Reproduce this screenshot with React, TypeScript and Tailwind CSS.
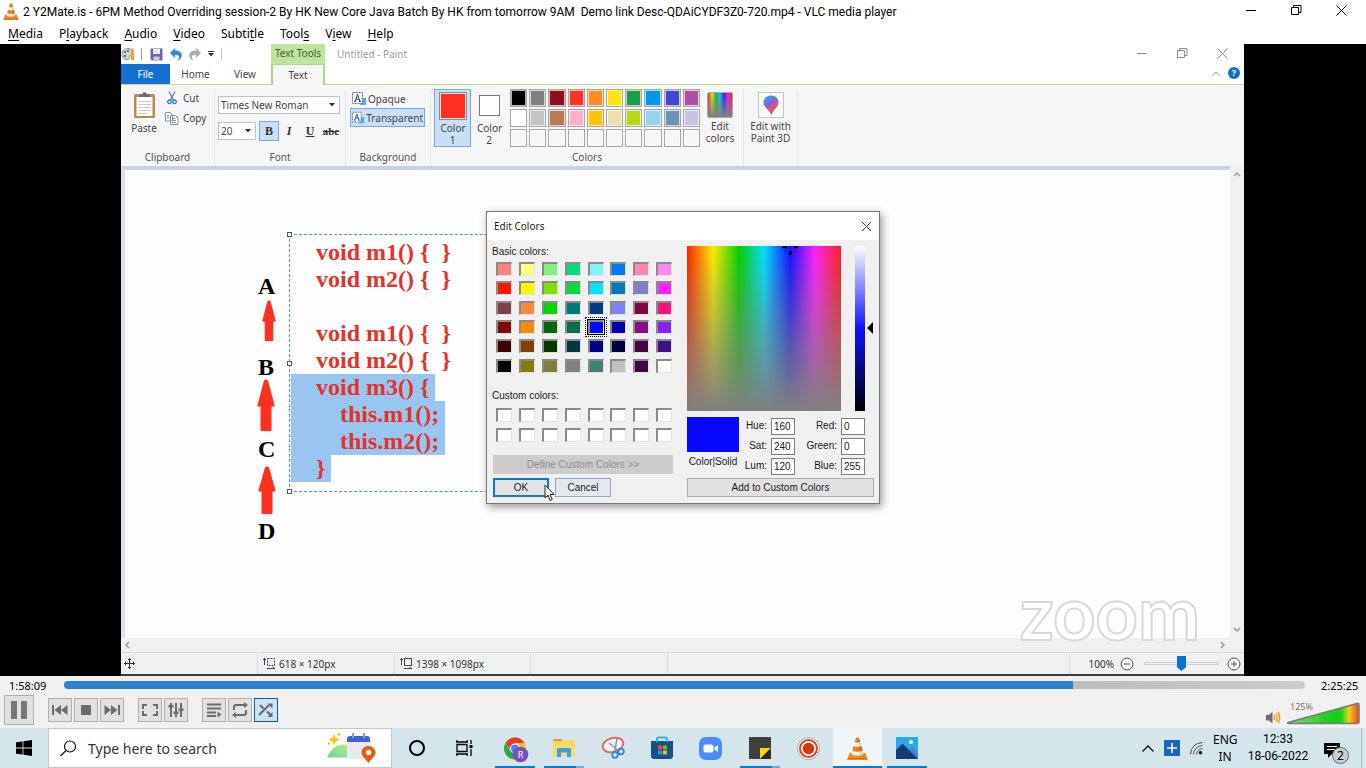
import React from "react";

const BASIC = [
  "#ff8080", "#ffff80", "#80f080", "#00dd80", "#80f5f5", "#0078ff", "#ff85b5", "#ff88f8",
  "#ff1500", "#fff500", "#80e000", "#00dc40", "#00e5ff", "#0078c0", "#8080c8", "#ff20ff",
  "#804048", "#ff8840", "#00d800", "#007878", "#003c80", "#8080ff", "#800840", "#ff1080",
  "#800808", "#ff8800", "#006800", "#007048", "#0808ff", "#0000a8", "#881080", "#8820ff",
  "#400000", "#804000", "#003800", "#003840", "#000088", "#000040", "#400840", "#401088",
  "#000000", "#808000", "#80803c", "#808080", "#408078", "#c0c0c0", "#400840", "#ffffff",
];
const PALETTE = [
  "#000000", "#7f7f7f", "#8c0f1f", "#ff3028", "#ff8a20", "#ffe800", "#1a9c4a", "#0096f0", "#4048d0", "#a852a4",
  "#ffffff", "#c3c3c3", "#ba7a56", "#ffb0c8", "#ffc408", "#eee0a8", "#b5d818", "#94d4ea", "#7092b4", "#c8c4e0",
  "#f6f6f6", "#f6f6f6", "#f6f6f6", "#f6f6f6", "#f6f6f6", "#f6f6f6", "#f6f6f6", "#f6f6f6", "#f6f6f6", "#f6f6f6",
];

function Cone({ className }: { className: string }) {
  return (
    <svg viewBox="0 0 20 22" className={className} aria-hidden="true">
      <path d="M2.5 15h15l2.3 6.5H.2z" fill="#f08a1c" />
      <path d="M.6 20.3h18.8l.4 1.3H.2z" fill="#c9620c" />
      <path d="M8.6.6h2.8L15.8 16c-2 2.4-9.600 2.400-11.600 0z" fill="#f4f4f4" />
      <path d="M8.600.6h2.800l1.300 4.200c-1.300.9-4.100.9-5.400 0z" fill="#ef7d12" />
      <path d="M6.200 8.600c2 1.200 5.600 1.200 7.600 0l1.200 4.200c-2.500 1.600-7.500 1.600-10 0z" fill="#ef7d12" />
      <path d="M11 .6h.4L15.800 16c-1 1.200-2.600 1.600-3.600 1.700z" fill="#00000022" />
    </svg>
  );
}

function WinButtons({ tone }: { tone: "main" | "paint" }) {
  const main = tone === "main";
  const btn = main ? "flex h-5 w-[45px] items-center justify-center text-black" : "flex h-[18px] w-10 items-center justify-center text-[#8d8d8d]";
  return (
    <div className={main ? "flex pr-0.5" : "flex pr-0.5"}>
      <button aria-label="Minimize" className={btn}>
        <svg width="11" height="11" stroke="currentColor" fill="none"><path d="M0 5.500h10" /></svg>
      </button>
      <button aria-label="Restore" className={btn}>
        <svg width="11" height="11" stroke="currentColor" fill="none"><path d="M.5 2.500h7v7h-7zM2.500 2.500v-2h7.500v7h-2.500" /></svg>
      </button>
      <button aria-label="Close" className={btn}>
        <svg width="11" height="11" stroke="currentColor" fill="none"><path d="M.5.5l10 10M10.500.5l-10 10" /></svg>
      </button>
    </div>
  );
}

const MENUS: [string, string, string][] = [
  ["", "M", "edia"], ["P", "l", "ayback"], ["", "A", "udio"], ["", "V", "ideo"],
  ["Subti", "t", "le"], ["Tool", "s", ""], ["V", "i", "ew"], ["", "H", "elp"],
];

function VlcHeader() {
  return (
    <header className="bg-white text-black">
      <div className="flex h-6 items-start">
        <Cone className="ml-[3px] mr-1 mt-[3px] h-[17px] w-4" />
        <h1 className="flex-1 whitespace-pre pt-1 font-['Roboto',sans-serif] text-[12px] leading-4">
          2 Y2Mate.is - 6PM Method Overriding session-2 By HK New Core Java Batch By HK from tomorrow 9AM  Demo link Desc-QDAiCYDF3Z0-720.mp4 - VLC media player
        </h1>
        <WinButtons tone="main" />
      </div>
      <nav className="flex h-5 items-center gap-4 px-2 text-[12px] leading-4">
        {MENUS.map(([a, b, c]) => (
          <button key={a + b + c}>{a}<span className="underline underline-offset-2">{b}</span>{c}</button>
        ))}
      </nav>
    </header>
  );
}

function Caret() {
  return <svg width="6" height="4" aria-hidden="true"><path d="M0 0h6L3 3.500z" fill="#333" /></svg>;
}

function SelectionIcon() {
  return (
    <svg width="14" height="14" viewBox="0 0 14 14" aria-hidden="true">
      <rect x="8" y="6" width="6" height="7" fill="#5aa9ee" />
      <rect x=".5" y=".5" width="10" height="11" fill="#f4f8fc" stroke="#55708c" strokeDasharray="2 1" />
      <path d="M3 9.500L5.500 2.500l2.500 7M4 7.200h3M2.300 9.500h1.600M7 9.500h1.800" fill="none" stroke="#2d4560" />
    </svg>
  );
}

function Group({ label, className, children }: { label: string; className: string; children?: React.ReactNode }) {
  return (
    <section className={"flex flex-col border-r border-[#e4e5e7] " + className} aria-label={label || "Paint 3D"}>
      <div className="flex flex-1">{children}</div>
      <div className="mb-px h-4 text-center leading-4 text-[#555]">{label}</div>
    </section>
  );
}

function PaintHeader() {
  return (
    <div>
      <div className="flex h-[41px] items-stretch border-b border-[#b5e092] bg-white">
        <div className="flex w-[150px] flex-col">
          <div className="flex h-5 items-center">
            <svg width="15" height="14" viewBox="0 0 15 14" aria-hidden="true">
              <path d="M1 7c0-3 3-5.500 6-5.500S12 3 12 6 9 7 9 9s-1 4-4 3.500S1 10 1 7z" fill="#cdd6de" stroke="#8594a0" />
              <circle cx="4" cy="5" r="1.200" fill="#e04343" /><circle cx="7" cy="4" r="1.200" fill="#37a148" /><circle cx="4" cy="9" r="1.300" fill="#2d7ad0" />
              <path d="M10 3.500l1.500-3L13 3.500V13h-3z" fill="#f0a040" />
            </svg>
            <i className="ml-[5px] h-3 w-px bg-[#999]" />
            <button aria-label="Save" className="ml-2">
              <svg width="13" height="13" viewBox="0 0 13 13"><path d="M.5.5h12v12H2L.5 11z" fill="#7862a8" /><path d="M3 1h7v5H3z" fill="#eceaf4" /><path d="M3.500 8.500h6V12h-6z" fill="#cfc8e2" /></svg>
            </button>
            <button aria-label="Undo" className="ml-[7px]">
              <svg width="12" height="13" viewBox="0 0 12 13"><path d="M5 0v2.500c9-.5 8.500 9 2 10.500 3.500-3.500 2.500-6.500-2-6v3L0 5z" fill="#3289d4" /></svg>
            </button>
            <button aria-label="Redo" className="ml-[7px]">
              <svg width="12" height="13" viewBox="0 0 12 13"><path d="M7 0v2.500c-9-.5-8.500 9-2 10.500-3.500-3.500-2.500-6.500 2-6v3L12 5z" fill="#a9adb2" /></svg>
            </button>
            <button aria-label="Customize toolbar" className="ml-[7px] flex flex-col items-center gap-px">
              <i className="h-px w-1.5 bg-[#333]" /><Caret />
            </button>
            <i className="ml-[7px] h-3 w-px bg-[#bbb]" />
          </div>
          <div className="flex h-5 text-[#444]">
            <button className="w-[49px] bg-[#1470d0] text-white">File</button>
            <button className="w-[51px]">Home</button>
            <button className="w-12">View</button>
          </div>
        </div>
        <div className="-mb-px flex w-[54px] flex-col text-center text-[#444]">
          <div className="h-5 bg-[#bfe49b] leading-[18px] text-[#3f6234]">Text Tools</div>
          <button className="flex-1 border-x-2 border-t border-[#a9dc80] bg-[#f6f6f6]">Text</button>
        </div>
        <div className="h-5 flex-1 pl-3 leading-5 text-[#9b9b9b]">Untitled - Paint</div>
        <div className="flex flex-col items-end">
          <WinButtons tone="paint" />
          <div className="flex h-[23px] items-center gap-2 pr-1">
            <svg width="8" height="5" fill="none" stroke="#999" aria-hidden="true"><path d="M.5 4.500L4 1l3.500 3.500" /></svg>
            <button aria-label="Help" className="size-3 rounded-full bg-[#0f6fcb] text-[9px] font-bold leading-3 text-white">?</button>
          </div>
        </div>
      </div>
      <div className="flex h-[81px] bg-[#f6f6f6] pt-1 text-[#444]">
        <Group label="Clipboard" className="w-[94px]">
          <button className="flex w-[46px] flex-col items-center pt-[3px]">
            <svg width="23" height="27" viewBox="0 0 23 27" aria-hidden="true">
              <rect x="1" y="2" width="21" height="24" rx="1.500" fill="#b98c4e" />
              <rect x="3.500" y="5" width="16" height="19" fill="#fff" />
              <path d="M5 9.500h13M5 12.500h13M5 15.500h13M5 18.500h13M5 21.500h9" stroke="#c2ccd6" />
              <path d="M6 5V2.500h3L10 .5h3l1 2h3V5z" fill="#666d75" />
            </svg>
            <span className="leading-[18px]">Paste</span>
          </button>
          <div className="flex flex-col gap-1 pt-px">
            <button className="flex h-4 items-center gap-1.5">
              <svg width="10" height="14" viewBox="0 0 10 14" fill="none" aria-hidden="true"><path d="M2 .5l4.500 8.500M8 .5L3.500 9" stroke="#6d7a88" strokeWidth="1.300" /><circle cx="2.500" cy="10.800" r="1.800" stroke="#2a7cc4" strokeWidth="1.300" /><circle cx="7.500" cy="10.800" r="1.800" stroke="#2a7cc4" strokeWidth="1.300" /></svg>
              Cut
            </button>
            <button className="-ml-0.5 flex h-4 items-center gap-1">
              <svg width="14" height="13" viewBox="0 0 14 13" fill="#fff" stroke="#8594a5" aria-hidden="true"><path d="M.5.5h5l2 2v6.500h-7zM5.500 3.500h5l2.500 2.500v6.500H5.500zM7 6.500h3M7 8.500h4M7 10.500h4M2 3.500h2M2 5.500h2" /></svg>
              Copy
            </button>
          </div>
        </Group>
        <Group label="Font" className="w-[131px]">
          <div className="flex flex-col gap-[7px] pl-[3px] pt-[7px]">
            <label className="relative flex h-[18px] w-[122px] items-center border border-[#bcc4d0] bg-white">
              <select aria-label="Font family" className="w-full appearance-none pl-0.5 leading-4"><option>Times New Roman</option></select>
              <span className="pointer-events-none absolute right-1 flex"><Caret /></span>
            </label>
            <div className="flex items-center gap-[3px]">
              <label className="relative flex h-[18px] w-[38px] items-center border border-[#bcc4d0] bg-white">
                <select aria-label="Font size" className="w-full appearance-none pl-0.5 leading-4"><option>20</option></select>
                <span className="pointer-events-none absolute right-1 flex"><Caret /></span>
              </label>
              <div className="flex font-['Liberation_Serif',serif] text-[12px] font-bold text-[#333]">
                <button className="h-5 w-5 border border-[#7aa9dc] bg-[#c9dff5]">B</button>
                <button className="h-5 w-5 italic">I</button>
                <button className="h-5 w-[22px] underline">U</button>
                <button className="h-5 w-5 text-[11px] line-through">abc</button>
              </div>
            </div>
          </div>
        </Group>
        <Group label="Background" className="w-[85px]">
          <div className="flex w-full flex-col pl-1 pr-[5px]">
            <button className="flex h-[19px] items-center gap-0.5 px-0.5"><SelectionIcon />Opaque</button>
            <button className="flex h-[19px] items-center gap-0.5 border border-[#7aa9dc] bg-[#c9dff5] px-px"><SelectionIcon />Transparent</button>
          </div>
        </Group>
        <Group label="Colors" className="w-[313px]">
          <button className="ml-[3px] flex h-[58px] w-[37px] flex-col items-center border border-[#7aa9dc] bg-[#c9dff5] pt-0.5 leading-3">
            <i className="mb-0.5 size-7 border border-[#8d8d8d] bg-[#ff3020] ring-1 ring-inset ring-[#ddd]" />
            <span className="w-6">Color 1</span>
          </button>
          <button className="flex h-[58px] w-9 flex-col items-center pt-1.5 leading-3">
            <i className="mb-1.5 size-[21px] border border-[#777] bg-white" />
            <span className="w-6">Color 2</span>
          </button>
          <div className="ml-px grid h-[58px] w-[194px] grid-cols-10 grid-rows-3 gap-0.5 px-0.5">
            {PALETTE.map((c, i) => (
              <button key={i} aria-label={"Color " + (i + 1)} className="border border-[#a5a5a5] ring-1 ring-inset ring-white/70" style={{ backgroundColor: c }} />
            ))}
          </div>
          <button className="ml-px flex w-[34px] flex-col items-center pt-[3px] leading-3">
            <i className="mb-0.5 size-[26px] rounded-xs border border-[#aaa] bg-[linear-gradient(to_bottom,transparent,#808080),linear-gradient(to_right,#e02020,#e8e820,#10c030,#10c8e8,#2020f0,#f020f0,#f02020)]" />
            <span>Edit<br />colors</span>
          </button>
        </Group>
        <Group label="" className="w-[54px]">
          <button className="flex w-full flex-col items-center pt-[3px] leading-3">
            <span className="mb-0.5 flex size-[26px] items-center justify-center border border-[#c4c4c4] bg-[#fafafa]">
              <svg width="16" height="21" viewBox="0 0 16 21" aria-hidden="true">
                <defs><linearGradient id="p3d" x1="0" y1="0" x2=".5" y2="1"><stop offset="0" stopColor="#20b8f0" /><stop offset=".45" stopColor="#7a68e0" /><stop offset=".75" stopColor="#f05060" /><stop offset="1" stopColor="#d06060" /></linearGradient></defs>
                <path d="M8 .5c4.500 0 7.500 3.200 7.500 7 0 5-6 7-7 13-2-6-8-8-8-13C.5 3.700 3.500.5 8 .5z" fill="url(#p3d)" />
              </svg>
            </span>
            <span>Edit with<br />Paint 3D</span>
          </button>
        </Group>
      </div>
    </div>
  );
}

function CodeLine({ text, selected }: { text: string; selected?: boolean }) {
  return <div className="h-[27px]"><span className={selected ? "inline-block h-[27px] bg-[#99c6f0] pl-px" : "pl-px"}>{text || " "}</span></div>;
}

function Arrow({ className }: { className: string }) {
  return (
    <svg viewBox="0 0 18 50" preserveAspectRatio="none" className={"absolute " + className} aria-hidden="true">
      <path d="M7 1.500Q9-.5 11 1.500L17.500 25q.5 1.500-1 1.500H14.500V49q0 1-1 1h-9q-1 0-1-1V26.500H1.500q-1.500 0-1-1.500z" fill="#ff3020" />
    </svg>
  );
}

function Field({ label, value }: { label: string; value: string }) {
  return (
    <label className="flex h-5 items-center justify-end gap-1">
      {label}
      <input defaultValue={value} className="h-[17px] w-6 border border-[#7d7d7d] bg-white pl-0.5 text-left outline-none" />
    </label>
  );
}

function Swatch({ color, active }: { color: string; active?: boolean }) {
  return (
    <button
      aria-label={"Color " + color}
      className={"h-[14px] w-4 border-b border-r border-b-[#e3e3e3] border-r-[#e3e3e3] border-l-2 border-t-2 border-l-[#8a8a8a] border-t-[#8a8a8a] " + (active ? "outline outline-1 outline-offset-2 outline-dotted outline-black ring-1 ring-black" : "")}
      style={{ backgroundColor: color }}
    />
  );
}

function EditColors() {
  return (
    <div role="dialog" aria-label="Edit Colors" className="absolute left-[365px] top-[45px] w-[394px] border border-[#777] bg-[#f0f0f0] pb-[6px] font-['Liberation_Sans',sans-serif] text-[10px] leading-3 text-[#1a1a1a] shadow-[2px_3px_8px_rgba(0,0,0,0.4)]">
      <div className="flex h-7 items-center bg-white px-[7px] font-['Noto_Sans',sans-serif]">
        <h2 className="flex-1">Edit Colors</h2>
        <button aria-label="Close dialog" className="text-[#333]"><svg width="11" height="11" stroke="currentColor"><path d="M1 1l9 9M10 1l-9 9" /></svg></button>
      </div>
      <div className="flex gap-[13px] px-[5px] pt-1.5">
        <div className="flex w-[182px] flex-col">
          <div>Basic colors:</div>
          <div className="mt-1 grid h-[116px] w-[187px] grid-cols-8 grid-rows-6 pl-1">
            {BASIC.map((c, i) => <Swatch key={i} color={c} active={i === 28} />)}
          </div>
          <div className="mt-3">Custom colors:</div>
          <div className="mt-1.5 grid h-[39px] w-[187px] grid-cols-8 grid-rows-2 pl-1">
            {Array.from({ length: 16 }, (_, i) => <Swatch key={i} color="#ffffff" />)}
          </div>
          <button disabled className="ml-px mt-2 h-[19px] w-[180px] bg-[#cccccc] text-[#8c8c8c]">Define Custom Colors &gt;&gt;</button>
          <div className="mt-1 flex gap-1.5 pl-px">
            <button className="h-[19px] w-14 border-2 border-[#1077d0] bg-[#e3e3e3]">OK</button>
            <button className="h-[19px] w-14 border border-[#8fa8c0] bg-[#e3e8ee]">Cancel</button>
          </div>
        </div>
        <div className="flex flex-1 flex-col">
          <div className="flex">
            <div className="relative h-[165px] w-[154px] bg-[linear-gradient(to_bottom,transparent,#808080),linear-gradient(to_right,#ff2000,#ffee00_17%,#00d000_34%,#00e0ff_50%,#1010ff_67%,#ff20ff_83%,#ff2020)]">
              <svg className="absolute left-[95px] top-0" width="17" height="10" aria-hidden="true"><path d="M0 1h5M12 1h4M8.500 5v4" stroke="#000" strokeWidth="2.500" /></svg>
            </div>
            <div className="ml-3.5 h-[165px] w-[10px] bg-[linear-gradient(to_bottom,#ffffff,#1010ff_50%,#000000)]" />
            <svg className="ml-0.5 mt-[76px]" width="6" height="12" aria-hidden="true"><path d="M6 0v12L0 6z" /></svg>
          </div>
          <div className="mt-1.5 flex">
            <div className="flex w-[52px] flex-col items-center gap-1">
              <i className="h-[35px] w-full bg-[#0808ff]" />
              <span>Color|Solid</span>
            </div>
            <div className="-mt-[1px] w-[56px]">
              <Field label="Hue:" value="160" /><Field label="Sat:" value="240" /><Field label="Lum:" value="120" />
            </div>
            <div className="-mt-[1px] w-[70px]">
              <Field label="Red:" value="0" /><Field label="Green:" value="0" /><Field label="Blue:" value="255" />
            </div>
          </div>
          <button className="mt-0.5 h-[19px] border border-[#adadad] bg-[#e1e1e1]">Add to Custom Colors</button>
        </div>
      </div>
      <svg className="absolute left-[57px] top-[272px]" width="12" height="18" viewBox="0 0 12 18" aria-hidden="true"><path d="M1 1v13l3-3 2 5.500 2.200-1L6 10.500h4z" fill="#fff" stroke="#222" /></svg>
    </div>
  );
}

function Chevron({ d }: { d: string }) {
  return <svg width="8" height="8" fill="none" stroke="#9a9a9a" strokeWidth="1.500" aria-hidden="true"><path d={d} /></svg>;
}

function PaintCanvas() {
  return (
    <div className="relative flex flex-1 flex-col bg-[#f0f0f0]">
      <div className="flex flex-1">
        <div className="flex-1 border-l-4 border-t-4 border-l-[#dbe1ea] border-t-[#c9d2df] bg-[#fdfdfd]" />
        <div className="flex w-[14px] flex-col items-center justify-between py-1">
          <Chevron d="M1 6l3-3 3 3" /><Chevron d="M1 2l3 3 3-3" />
        </div>
      </div>
      <div className="flex h-[14px] items-center justify-between pl-[3px] pr-[18px]">
        <Chevron d="M5 1L2 4l3 3" /><Chevron d="M3 1l3 3-3 3" />
      </div>

      <div className="font-['Liberation_Serif',serif] text-[24px] font-bold leading-[27px]">
        <span className="absolute left-[137px] top-[107px]">A</span>
        <span className="absolute left-[137px] top-[188px]">B</span>
        <span className="absolute left-[137px] top-[270px]">C</span>
        <span className="absolute left-[137px] top-[352px]">D</span>
        <Arrow className="left-[141px] top-[134px] h-[41px] w-[14px]" />
        <Arrow className="left-[136px] top-[213px] h-[52px] w-[18px]" />
        <Arrow className="left-[137px] top-[300px] h-[48px] w-[18px]" />
        <div className="absolute left-[168px] top-[68px] h-[258px] w-[500px] whitespace-pre border border-dashed border-[#4a97dd] pl-px pt-1 text-[#e2332c]">
          <i className="absolute -left-[3px] -top-[3px] size-[5px] border border-[#555] bg-white" />
          <i className="absolute -left-[3px] top-[126px] size-[5px] border border-[#555] bg-white" />
          <i className="absolute -bottom-[3px] -left-[3px] size-[5px] border border-[#555] bg-white" />
          <CodeLine text="    void m1() {  }" />
          <CodeLine text="    void m2() {  }" />
          <CodeLine text="" />
          <CodeLine text="    void m1() {  }" />
          <CodeLine text="    void m2() {  }" />
          <CodeLine text="    void m3() { " selected />
          <CodeLine text="        this.m1(); " selected />
          <CodeLine text="        this.m2(); " selected />
          <CodeLine text="    } " selected />
        </div>
      </div>

      <div className="absolute bottom-[15px] right-[44px] font-['Lato',sans-serif] text-[74px] font-bold leading-[50px] text-white [-webkit-text-stroke:2px_#d8d8d8]">zoom</div>
      <EditColors />
    </div>
  );
}

function PaintStatus() {
  const cell = "flex items-center gap-1 border-r border-[#dcdcdc] ";
  return (
    <div className="flex h-6 border-b-2 border-t border-b-[#3a3a3a] border-t-[#dadada] bg-[#f0f0f0] text-[#333]">
      <div className={cell + "w-[137px] pl-[3px]"}>
        <svg width="11" height="11" fill="none" stroke="#333" aria-hidden="true"><path d="M5.500 0v11M0 5.500h11M4 2l1.500-1.500L7 2M4 9l1.500 1.500L7 9M2 4L.5 5.500 2 7M9 4l1.500 1.500L9 7" /></svg>
      </div>
      <div className={cell + "w-[137px] pl-[5px]"}>
        <svg width="12" height="11" fill="none" stroke="#445" aria-hidden="true"><path d="M1.500 0v7M0 2l1.500-1.500L3 2M4 10.500h8M9.500 9l2 1.500" /><rect x="4.500" y=".5" width="7" height="7" strokeDasharray="2 1" /></svg>
        618 × 120px
      </div>
      <div className={cell + "w-[136px] pl-[5px]"}>
        <svg width="12" height="11" fill="none" stroke="#445" aria-hidden="true"><path d="M1.500 0v7M0 2l1.500-1.500L3 2M4 10.500h8M9.500 9l2 1.500" /><rect x="4.500" y=".5" width="7" height="7" /></svg>
        1398 × 1098px
      </div>
      <div className={cell + "w-[137px]"} />
      <div className="flex-1 border-r border-[#dcdcdc]" />
      <div className="flex w-[174px] items-center justify-end gap-1 pr-[3px]">
        <span>100%</span>
        <button aria-label="Zoom out" className="mx-0.5"><svg width="14" height="14" fill="#fafafa" stroke="#555"><circle cx="7" cy="7" r="6" /><path d="M4 7h6" /></svg></button>
        <input type="range" aria-label="Zoom" defaultValue={50} className="mx-1 h-4 w-[75px] appearance-none bg-transparent [&::-webkit-slider-runnable-track]:h-[3px] [&::-webkit-slider-runnable-track]:border [&::-webkit-slider-runnable-track]:border-[#cfcfcf] [&::-webkit-slider-thumb]:-mt-[7px] [&::-webkit-slider-thumb]:h-[15px] [&::-webkit-slider-thumb]:w-[9px] [&::-webkit-slider-thumb]:appearance-none [&::-webkit-slider-thumb]:bg-[#0a70d8] [&::-webkit-slider-thumb]:[clip-path:polygon(0_0,100%_0,100%_75%,50%_100%,0_75%)]" />
        <button aria-label="Zoom in"><svg width="14" height="14" fill="#fafafa" stroke="#555"><circle cx="7" cy="7" r="6" /><path d="M4 7h6M7 4v6" /></svg></button>
      </div>
    </div>
  );
}

function CtlButton({ label, className, active, children }: { label: string; className?: string; active?: boolean; children: React.ReactNode }) {
  return (
    <button aria-label={label} className={"flex size-6 items-center justify-center border " + (active ? "border-[#0a5fa8] bg-[#cce4f7] " : "border-[#b0b0b0] bg-[#e1e1e1] ") + (className || "")}>
      <svg width="16" height="16" viewBox="0 0 16 16" fill="#6c6c6c" stroke="none">{children}</svg>
    </button>
  );
}

function Controls() {
  return (
    <footer className="bg-[#f0f0f0] text-black">
      <div className="flex h-[18px] items-center gap-4 px-2 text-[11px]">
        <span className="w-10 pl-px pt-0.5">1:58:09</span>
        <input type="range" aria-label="Position" defaultValue={81} className="h-2 flex-1 appearance-none rounded-md bg-[linear-gradient(to_right,#2d82d2_81.3%,#bdbdbd_81.3%,#cccccc)] [&::-webkit-slider-thumb]:appearance-none [&::-webkit-slider-thumb]:opacity-0" />
        <span className="w-[37px] whitespace-nowrap pt-0.5">2:25:25</span>
      </div>
      <div className="flex h-[34px] items-center pb-0.5 pl-1">
        <button aria-label="Pause" className="flex size-[30px] items-center justify-center border border-[#b0b0b0] bg-[#e1e1e1]">
          <svg width="16" height="18" fill="#777"><path d="M0 0h6v18H0zM10 0h6v18h-6z" /></svg>
        </button>
        <div className="ml-3.5 flex gap-0.5">
          <CtlButton label="Previous"><path d="M0 3h2v10H0zM2.500 8L9 3v10zM9 8l6.500-5v10z" /></CtlButton>
          <CtlButton label="Stop"><path d="M3 3h10v10H3z" /></CtlButton>
          <CtlButton label="Next"><path d="M14 3h2v10h-2zM13.500 8L7 3v10zM7 8L.5 3v10z" /></CtlButton>
        </div>
        <div className="ml-3.5 flex gap-0.5">
          <CtlButton label="Fullscreen"><path d="M0 2h5v2H2v3H0zM11 2h5v5h-2V4h-3zM0 9h2v3h3v2H0zM14 9h2v5h-5v-2h3z" /></CtlButton>
          <CtlButton label="Extended settings"><path d="M2 1h2v14H2zM7 1h2v14H7zM12 1h2v14h-2zM.5 3h5v2.500h-5zM5.500 9.500h5V12h-5zM10.500 6.500h5V9h-5z" /></CtlButton>
        </div>
        <div className="ml-3.5 flex gap-0.5">
          <CtlButton label="Playlist"><path d="M1 1.500h14v2H1zM1 5.500h14v2H1zM1 9.500h9v2H1zM1 13h9v2H1zM11.500 9.500l4 3-4 3z" /></CtlButton>
          <CtlButton label="Loop"><path d="M1 8V5q0-3 3-3h8V0l4 3-4 3V4H4Q3 4 3 5v3zM15 8v3q0 3-3 3H4v2l-4-3 4-3v2h8q1 0 1-1V8z" /></CtlButton>
          <CtlButton label="Random" active><path d="M1 13L11 3M2 3l3.500 3.500M9 9.500l4 4" stroke="#6c6c6c" strokeWidth="2.200" /><path d="M9.500 1.500h5v5zM14.500 10v5h-5z" /></CtlButton>
        </div>
        <div className="flex-1" />
        <svg width="15" height="14" viewBox="0 0 15 14" fill="none" className="mr-1.5 mt-4" aria-hidden="true">
          <path d="M0 4h3l3.500-3.500v12L3 9.500H0z" fill="#6c6c6c" />
          <path d="M8 4q1.500 2.500 0 5M10 2.500q2.500 4 0 8M12 1q3.500 5.500 0 11" stroke="#f59a20" strokeWidth="1.400" />
        </svg>
        <label className="relative mr-1.5 flex h-7 w-[73px]">
          <span className="absolute left-[3px] top-1 text-[9px] leading-[14px] text-[#777]">125%</span>
          <svg width="73" height="24" viewBox="0 0 73 24" className="mt-1.5" aria-hidden="true">
            <defs><linearGradient id="vol"><stop offset="0" stopColor="#80d880" /><stop offset=".6" stopColor="#18d018" /><stop offset=".75" stopColor="#18d018" /><stop offset=".86" stopColor="#f0d020" /><stop offset="1" stopColor="#f04020" /></linearGradient></defs>
            <path d="M1 20.500L70 1.500q2-.5 2 1V20q0 1.500-1.500 1.500H2q-2 0-1-1z" fill="url(#vol)" stroke="#7a7a7a" strokeWidth="1.500" />
          </svg>
          <input type="range" aria-label="Volume" defaultValue={100} className="absolute inset-0 w-full opacity-0" />
        </label>
      </div>
    </footer>
  );
}

function Task({ label, bar, active, children }: { label: string; bar?: "one" | "many"; active?: boolean; children: React.ReactNode }) {
  return (
    <button aria-label={label} className={"relative flex h-10 w-[49px] items-center justify-center " + (active ? "bg-[#f0f5f8]" : "")}>
      {children}
      {bar && <i className={"absolute bottom-0 flex h-0.5 bg-[#0a78d4] " + (active ? "inset-x-0" : "left-[5px] right-1")}>{bar === "many" && <b className="ml-auto h-0.5 w-2 bg-[#70aee2]" />}</i>}
    </button>
  );
}

function Taskbar() {
  return (
    <div className="flex h-10 items-center bg-[#d5e5ec] text-black">
      <button aria-label="Start" className="flex h-10 w-12 items-center justify-center">
        <svg width="16" height="16" viewBox="0 0 16 16"><path d="M0 2.300L6.600 1.400v6.200H0zM7.400 1.300L16 0v7.600H7.400zM0 8.400h6.600v6.200L0 13.700zM7.400 8.400H16V16l-8.600-1.200z" /></svg>
      </button>
      <label className="flex h-10 w-[344px] items-center border border-[#c4c8ca] bg-white pl-[11px]">
        <svg width="17" height="17" fill="none" stroke="#111" strokeWidth="1.200" aria-hidden="true"><circle cx="10" cy="6.500" r="5.500" /><path d="M6 10.500L.5 16" /></svg>
        <input aria-label="Search" placeholder="Type here to search" className="ml-[11px] min-w-0 flex-1 text-[14px] outline-none placeholder:text-[#333]" />
        <svg width="49" height="30" viewBox="0 0 49 30" className="mr-[15px]" aria-hidden="true">
          <defs><linearGradient id="hill" x1="0" y1="1" x2="1" y2="0"><stop offset="0" stopColor="#6fd09a" /><stop offset="1" stopColor="#b8f080" /></linearGradient></defs>
          <path d="M7 1l1.800 3.700L12.500 6.500 8.800 8.300 7 12 5.200 8.300 1.500 6.500l3.700-1.800z" fill="#ffc400" /><circle cx="12" cy="1.500" r="1.200" fill="#ffb400" /><circle cx="2" cy="10.500" r="1.200" fill="#ffb400" />
          <path d="M0 24.500Q5 12 16 11.500q6 0 7 4v9z" fill="url(#hill)" />
          <rect x="20" y="5" width="24" height="21" rx="3" fill="#e9e9ee" />
          <path d="M20 9V6q0-3 3-3h17q3 0 3 3v3z" fill="#3f62d6" /><path d="M26 0v5M37 0v5" stroke="#8fa0c8" strokeWidth="2" />
          <path d="M41.500 13c4 0 7 3 7 6.500 0 4-4 6-7 10.500-3-4.500-7-6.500-7-10.500 0-3.500 3-6.500 7-6.500z" fill="#e8590c" /><circle cx="41.500" cy="19.500" r="2.800" fill="#fff" />
        </svg>
      </label>
      <Task label="Cortana"><i className="size-4 rounded-full border-2 border-black" /></Task>
      <Task label="Task view">
        <svg width="17" height="16" fill="none" stroke="#000" strokeWidth="1.300" className="mr-0.5"><path d="M1 4.500h10v7H1zM.700 0v2h10.600V0M.700 16v-2h10.600v2M15 0v4M15 9v7" /><path d="M13.500 5h3v3h-3z" fill="#000" stroke="none" /></svg>
      </Task>
      <Task label="Chrome" bar="one">
        <svg width="26" height="26" viewBox="0 0 26 26" className="ml-0.5 mt-1">
          <circle cx="12" cy="11.500" r="11" fill="#fbc116" />
          <path d="M12 11.500L7.500 14 2.500 6A11 11 0 0 0 12 22.500l4.500-8z" fill="#2da94f" />
          <path d="M2.500 6A11 11 0 0 1 21.500 6H12L8 13z" fill="#e33b2e" />
          <circle cx="12" cy="11.500" r="5" fill="#fff" /><circle cx="12" cy="11.500" r="4" fill="#4285f4" />
          <circle cx="17.500" cy="17.500" r="7.800" fill="#7650b8" /><text x="17.500" y="20.800" textAnchor="middle" fontSize="9" fill="#fff" fontFamily="Noto Sans">R</text>
        </svg>
      </Task>
      <Task label="File Explorer" bar="many">
        <svg width="22" height="20" viewBox="0 0 22 20"><path d="M0 2q0-1 1-1h7l2 2.500H0z" fill="#e0a014" /><path d="M0 3.500h10L11 2h10q1 0 1 1v15H0z" fill="#ffd968" /><path d="M4 19v-8q0-1 1-1h12q1 0 1 1v8h-4v-4.500H8V19z" fill="#3d9fe2" /></svg>
      </Task>
      <Task label="Snip">
        <svg width="25" height="24" viewBox="0 0 25 24" fill="none" className="ml-0.5"><ellipse cx="12" cy="9" rx="10.500" ry="7" transform="rotate(-15 12 9)" fill="#f4f4f6" stroke="#e06a6c" strokeWidth="2" /><path d="M8 7l10 8M16 3l-2.500 13" stroke="#8b9299" strokeWidth="1.500" /><circle cx="14" cy="19" r="2.800" stroke="#2a8cc8" strokeWidth="1.800" /><circle cx="20" cy="15.500" r="2.800" stroke="#2a8cc8" strokeWidth="1.800" /></svg>
      </Task>
      <Task label="Store">
        <svg width="24" height="24" viewBox="0 0 24 24"><path d="M1 5h22v15q0 3-3 3H4q-3 0-3-3z" fill="#174e8c" /><path d="M7 6V3q0-1.500 1.500-1.500h7Q17 1.500 17 3v3" fill="none" stroke="#29b8e8" strokeWidth="2" /><path d="M8 9.500h4v4H8z" fill="#f25022" /><path d="M13 9.500h4v4h-4z" fill="#7fba00" /><path d="M8 14.500h4v4H8z" fill="#00a4ef" /><path d="M13 14.500h4v4h-4z" fill="#ffb900" /></svg>
      </Task>
      <Task label="Zoom">
        <svg width="23" height="23" viewBox="0 0 23 23"><rect width="23" height="23" rx="7" fill="#4a8cfc" /><rect x="4.500" y="7.500" width="10" height="8" rx="2" fill="#fff" /><path d="M15.500 10.500l3.500-2.500v7l-3.500-2.500z" fill="#fff" /></svg>
      </Task>
      <Task label="Sticky Notes" bar="many">
        <svg width="22" height="22" viewBox="0 0 22 22"><path d="M0 0h22v22H0z" fill="#404040" /><path d="M11 22V11h11z" fill="#ffd800" /><path d="M11 22L22 11v11z" fill="#2b2b2b" /></svg>
      </Task>
      <Task label="Recorder">
        <svg width="23" height="23" viewBox="0 0 23 23"><circle cx="11.500" cy="11.500" r="11" fill="#fff" stroke="#a8a8a8" /><circle cx="11.500" cy="11.500" r="8.500" fill="#fff" stroke="#d2481c" strokeWidth="2" /><circle cx="11.500" cy="11.500" r="5.800" fill="#cf3608" /></svg>
      </Task>
      <Task label="VLC" bar="one" active><Cone className="h-[23px] w-[21px]" /></Task>
      <Task label="Photos" bar="one">
        <svg width="22" height="22" viewBox="0 0 22 22"><path d="M0 0h22v22H0z" fill="#2aa8ec" /><path d="M10 16l6-6 6 6v6H10z" fill="#4f7edc" /><path d="M0 13l6.500-6.500L22 22H0z" fill="#123c78" /><circle cx="15" cy="5" r="2" fill="#fff" /></svg>
      </Task>
      <div className="flex-1" />
      <button aria-label="Show hidden icons" className="mr-2.5"><svg width="12" height="7" fill="none" stroke="#111" strokeWidth="1.300"><path d="M.5 6.500L6 1l5.500 5.500" /></svg></button>
      <svg width="16" height="16" className="mr-2.5" aria-hidden="true"><path d="M0 0h16v16H0z" fill="#1a66bd" /><path d="M8 3v10M3 8h10" stroke="#fff" strokeWidth="1.600" /></svg>
      <svg width="13" height="13" viewBox="0 0 13 13" fill="none" stroke="#555" className="mr-2.5" aria-hidden="true"><path d="M.5 12.500Q1 1.500 12.500.5M3.500 12.500Q4 4.500 12.500 3.500M6.500 12.500Q7 7.500 12.500 6.500" /><circle cx="10.500" cy="10.800" r="1.800" fill="#111" stroke="none" /></svg>
      <div className="w-6 text-center text-[12px] leading-[17px]">ENG<br />IN</div>
      <div className="ml-3 flex w-[58px] flex-col items-center whitespace-nowrap font-['Roboto',sans-serif] text-[12px] leading-[17px]"><span>12:33</span><span>18-06-2022</span></div>
      <button aria-label="Notifications" className="relative ml-[17px] mr-3 h-8 w-[25px]">
        <svg width="17" height="17" className="mt-1"><path d="M0 1h16v11H8l-4 4v-4H0z" /><path d="M3 4.500h10M3 7.500h10" stroke="#fff" /></svg>
        <span className="absolute bottom-0 right-0 size-[17px] rounded-full border border-[#666] bg-[#c8d0d4] text-center text-[12px] leading-[15px]">2</span>
      </button>
      <i className="mr-1 h-10 w-px bg-[#a9b8c0]" />
    </div>
  );
}

export default function App() {
  return (
    <div className="flex min-h-screen flex-col font-['Noto_Sans',sans-serif]">
      <VlcHeader />
      <main className="flex flex-1 bg-black pl-[121px] pr-[122px]">
        <div className="flex min-w-0 flex-1 flex-col overflow-hidden text-[10px] leading-4">
          <PaintHeader />
          <PaintCanvas />
          <PaintStatus />
        </div>
      </main>
      <Controls />
      <Taskbar />
    </div>
  );
}
